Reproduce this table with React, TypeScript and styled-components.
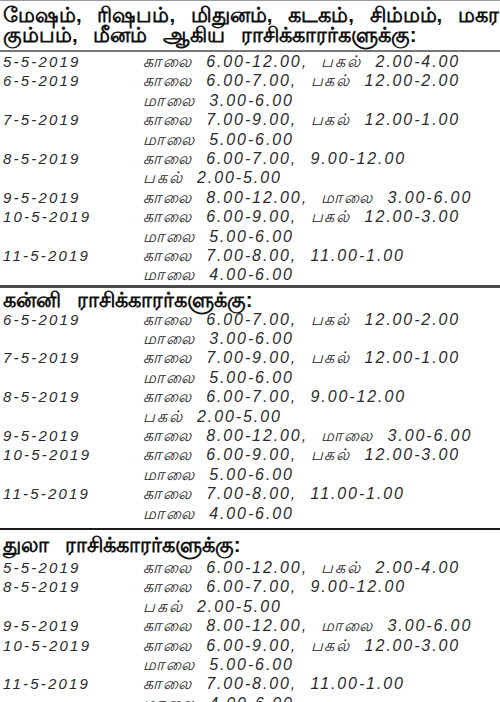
import React from 'react';
import styled, { createGlobalStyle } from 'styled-components';

type Entry = { date: string; times: string[] };
type RuleKind = 'top' | 'light' | 'heavy' | 'dark';
type Section = { title: string[]; rule: RuleKind; pad: string; entries: Entry[] };

const sections: Section[] = [
    {
        title: [
            'மேஷம், ரிஷபம், மிதுனம், கடகம், சிம்மம், மகரம்,',
            'கும்பம், மீனம் ஆகிய ராசிக்காரர்களுக்கு:',
        ],
        rule: 'top',
        pad: '4px 0 5px 3px',
        entries: [
            { date: '5-5-2019', times: ['காலை 6.00-12.00, பகல் 2.00-4.00'] },
            { date: '6-5-2019', times: ['காலை 6.00-7.00, பகல் 12.00-2.00', 'மாலை 3.00-6.00'] },
            { date: '7-5-2019', times: ['காலை 7.00-9.00, பகல் 12.00-1.00', 'மாலை 5.00-6.00'] },
            { date: '8-5-2019', times: ['காலை 6.00-7.00, 9.00-12.00', 'பகல் 2.00-5.00'] },
            { date: '9-5-2019', times: ['காலை 8.00-12.00, மாலை 3.00-6.00'] },
            { date: '10-5-2019', times: ['காலை 6.00-9.00, பகல் 12.00-3.00', 'மாலை 5.00-6.00'] },
            { date: '11-5-2019', times: ['காலை 7.00-8.00, 11.00-1.00', 'மாலை 4.00-6.00'] },
        ],
    },
    {
        title: ['கன்னி ராசிக்காரர்களுக்கு:'],
        rule: 'heavy',
        pad: '2px 0 0 3px',
        entries: [
            { date: '6-5-2019', times: ['காலை 6.00-7.00, பகல் 12.00-2.00', 'மாலை 3.00-6.00'] },
            { date: '7-5-2019', times: ['காலை 7.00-9.00, பகல் 12.00-1.00', 'மாலை 5.00-6.00'] },
            { date: '8-5-2019', times: ['காலை 6.00-7.00, 9.00-12.00', 'பகல் 2.00-5.00'] },
            { date: '9-5-2019', times: ['காலை 8.00-12.00, மாலை 3.00-6.00'] },
            { date: '10-5-2019', times: ['காலை 6.00-9.00, பகல் 12.00-3.00', 'மாலை 5.00-6.00'] },
            { date: '11-5-2019', times: ['காலை 7.00-8.00, 11.00-1.00', 'மாலை 4.00-6.00'] },
        ],
    },
    {
        title: ['துலா ராசிக்காரர்களுக்கு:'],
        rule: 'dark',
        pad: '5px 0 3px 3px',
        entries: [
            { date: '5-5-2019', times: ['காலை 6.00-12.00, பகல் 2.00-4.00'] },
            { date: '8-5-2019', times: ['காலை 6.00-7.00, 9.00-12.00', 'பகல் 2.00-5.00'] },
            { date: '9-5-2019', times: ['காலை 8.00-12.00, மாலை 3.00-6.00'] },
            { date: '10-5-2019', times: ['காலை 6.00-9.00, பகல் 12.00-3.00', 'மாலை 5.00-6.00'] },
            { date: '11-5-2019', times: ['காலை 7.00-8.00, 11.00-1.00', 'மாலை 4.00-6.00'] },
        ],
    },
];

export default function App() {
    return (
        <>
            <GlobalStyle />
            <Page>
                {sections.map((section, i) => (
                    <SectionBlock key={i}>
                        <Rule $kind={section.rule} />
                        <Title $pad={section.pad}>
                            {section.title.map((line) => (
                                <TitleLine key={line}>{line}</TitleLine>
                            ))}
                        </Title>
                        {i === 0 && <Rule $kind="light" />}
                        <Table>
                            {section.entries.map((entry) => (
                                <React.Fragment key={entry.date}>
                                    <DateCell>{entry.date}</DateCell>
                                    <Times>
                                        {entry.times.map((t) => (
                                            <TimeLine key={t}>{t}</TimeLine>
                                        ))}
                                    </Times>
                                </React.Fragment>
                            ))}
                        </Table>
                    </SectionBlock>
                ))}
            </Page>
        </>
    );
}

const GlobalStyle = createGlobalStyle`
    html, body {
        margin: 0;
        padding: 0;
        background: #fff;
    }
`;

// the page is a cropped newspaper clip, so the long first heading runs off the right edge
const Page = styled.div`
    width: 500px;
    height: 702px;
    overflow: hidden;
    background: #fff;
    color: #1e1e1e;
    font-family: "Liberation Sans", "Noto Sans", "DejaVu Sans", sans-serif;
`;

const SectionBlock = styled.section`
    display: flex;
    flex-direction: column;
`;

const Rule = styled.div<{ $kind: RuleKind }>`
    flex: none;
    height: ${(p) => (p.$kind === 'heavy' ? '3px' : p.$kind === 'top' ? '1px' : '2px')};
    background: ${(p) =>
        p.$kind === 'heavy' ? '#4a4a4a' : p.$kind === 'dark' ? '#1a1a1a' : p.$kind === 'top' ? '#999' : '#777'};
    margin-top: ${(p) => (p.$kind === 'dark' ? '5px' : '0')};
`;

const Title = styled.h2<{ $pad: string }>`
    margin: 0;
    padding: ${(p) => p.$pad};
    font-size: 20.5px;
    font-weight: 700;
    color: #111;
    word-spacing: 10px;
    white-space: nowrap;
`;

const TitleLine = styled.div`
    height: 20px;
    line-height: 20px;
`;

const Table = styled.div`
    display: grid;
    grid-template-columns: 140px 1fr;
    padding-left: 3px;
    font-style: italic;
    color: #2a2a2a;
`;

const DateCell = styled.div`
    height: 19.4px;
    line-height: 19.4px;
    font-size: 15px;
    letter-spacing: 2.2px;
`;

const Times = styled.div`
    display: flex;
    flex-direction: column;
`;

const TimeLine = styled.div`
    height: 19.4px;
    line-height: 19.4px;
    font-size: 16px;
    letter-spacing: 1.9px;
    word-spacing: 7px;
    white-space: nowrap;
`;
